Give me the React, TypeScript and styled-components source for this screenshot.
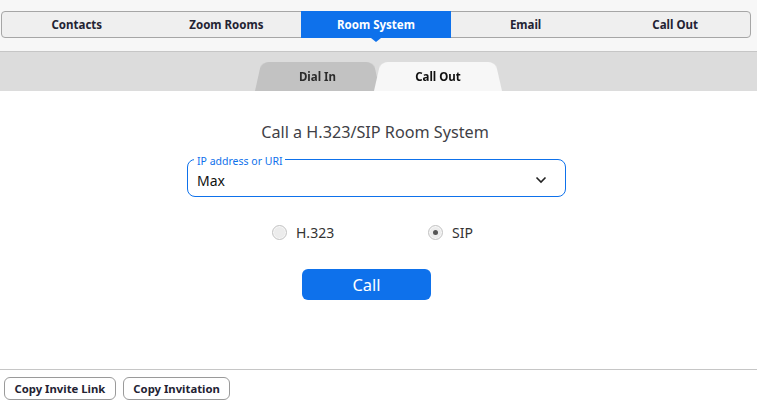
import React, { useState } from "react";
import styled, { createGlobalStyle } from "styled-components";

const Global = createGlobalStyle`
  html, body { margin: 0; padding: 0; background: #ffffff; }
  body { font-family: "Noto Sans", "Open Sans", sans-serif; }
  * { box-sizing: border-box; }
`;

const Page = styled.div`
  width: 757px;
  height: 404px;
  display: flex;
  flex-direction: column;
  background: #ffffff;
  overflow: hidden;
`;

const TopBar = styled.div`
  background: #f7f7f7;
  padding: 11px 6px 0 1px;
  height: 52px;
  border-bottom: 1px solid #c6c6c6;
`;

const Segmented = styled.div`
  display: grid;
  grid-template-columns: repeat(5, 1fr);
  height: 27px;
  border: 1px solid #a6a6a6;
  border-radius: 4px;
  background: #efefef;
`;

const Segment = styled.div<{ $active?: boolean }>`
  position: relative;
  display: flex;
  align-items: center;
  justify-content: center;
  font-size: 11.5px;
  font-weight: 700;
  color: ${(p) => (p.$active ? "#ffffff" : "#232333")};
  background: ${(p) => (p.$active ? "#0e71eb" : "transparent")};
  margin: -1px 0;
  &::after {
    content: "";
    display: ${(p) => (p.$active ? "block" : "none")};
    position: absolute;
    left: 50%;
    bottom: -4px;
    margin-left: -5px;
    border-left: 5px solid transparent;
    border-right: 5px solid transparent;
    border-top: 4px solid #0e71eb;
  }
`;

const SubBar = styled.div`
  background: #dcdcdc;
  height: 39px;
  display: flex;
  justify-content: center;
  align-items: flex-end;
`;

const Tab = styled.div<{ $active?: boolean; $w: number }>`
  position: relative;
  width: ${(p) => p.$w}px;
  height: 33px;
  padding-top: 3px;
  display: flex;
  align-items: center;
  justify-content: center;
  font-size: 11.5px;
  font-weight: 700;
  color: ${(p) => (p.$active ? "#111111" : "#2b2b2b")};
  z-index: ${(p) => (p.$active ? 2 : 1)};
  margin: 0 -3px;
  &::before {
    content: "";
    position: absolute;
    inset: 0;
    background: ${(p) => (p.$active ? "#f7f7f7" : "#c2c2c2")};
    border-radius: 8px 8px 0 0;
    transform: perspective(60px) rotateX(12deg);
    transform-origin: bottom;
    z-index: -1;
  }
`;

const Content = styled.div`
  flex: 1;
  display: flex;
  flex-direction: column;
  align-items: center;
  padding-top: 31px;
`;

const Title = styled.div`
  font-size: 16.2px;
  color: #3f3f46;
  line-height: 20px;
  margin-right: 7px;
`;

const Field = styled.div`
  position: relative;
  margin: 17px 4px 0 0;
  width: 379px;
  height: 38px;
  border: 1px solid #0e71eb;
  border-radius: 8px;
  padding: 4px 18px 0 9px;
  display: flex;
  align-items: center;
  justify-content: space-between;
`;

const Label = styled.span`
  position: absolute;
  left: 6px;
  top: -5px;
  font-size: 10.5px;
  line-height: 12px;
  color: #0e71eb;
  background: #ffffff;
  padding: 0 3px;
`;

const Value = styled.div`
  font-size: 14px;
  color: #111111;
`;

const Chevron = styled.svg`
  width: 12px;
  height: 8px;
`;

const Radios = styled.div`
  display: flex;
  margin-top: 26px;
  margin-left: 3px;
`;

const RadioItem = styled.div<{ $w: number }>`
  width: ${(p) => p.$w}px;
  display: flex;
  align-items: center;
  gap: 9px;
  font-size: 14px;
  color: #333333;
  cursor: pointer;
`;

const RadioCircle = styled.span<{ $checked?: boolean }>`
  width: 15px;
  height: 15px;
  border-radius: 50%;
  border: 1px solid #c4c4c4;
  background: #ececec;
  display: flex;
  align-items: center;
  justify-content: center;
  box-shadow: inset 0 0 0 1px #f7f7f7;
  &::after {
    content: "";
    display: ${(p) => (p.$checked ? "block" : "none")};
    width: 5px;
    height: 5px;
    border-radius: 50%;
    background: #555555;
  }
`;

const CallButton = styled.button`
  margin-top: 27px;
  margin-right: 24px;
  width: 129px;
  height: 31px;
  border: none;
  border-radius: 6px;
  background: #0e71eb;
  color: #ffffff;
  font-family: "Noto Sans", sans-serif;
  font-size: 16.5px;
  padding: 0;
`;

const Footer = styled.div`
  height: 35px;
  border-top: 1px solid #c6c6c6;
  display: flex;
  align-items: flex-start;
  gap: 7px;
  padding: 7px 0 0 4px;
`;

const FooterButton = styled.button`
  height: 23px;
  border: 1px solid #9a9a9a;
  border-radius: 6px;
  background: #ffffff;
  font-family: "Noto Sans", sans-serif;
  font-size: 11.3px;
  font-weight: 700;
  color: #232333;
  padding: 0 9.5px;
`;

export default function App() {
  const [proto, setProto] = useState("SIP");
  const segs = ["Contacts", "Zoom Rooms", "Room System", "Email", "Call Out"];
  return (
    <Page>
      <Global />
      <TopBar>
        <Segmented>
          {segs.map((s) => (
            <Segment key={s} $active={s === "Room System"}>
              {s}
            </Segment>
          ))}
        </Segmented>
      </TopBar>
      <SubBar>
        <Tab $w={125}>Dial In</Tab>
        <Tab $w={128} $active>
          Call Out
        </Tab>
      </SubBar>
      <Content>
        <Title>Call a H.323/SIP Room System</Title>
        <Field>
          <Label>IP address or URI</Label>
          <Value>Max</Value>
          <Chevron viewBox="0 0 12 8">
            <path d="M1.5 1.5 L6 6 L10.5 1.5" fill="none" stroke="#222" strokeWidth="1.6" />
          </Chevron>
        </Field>
        <Radios>
          {[
            { k: "H.323", w: 156 },
            { k: "SIP", w: 60 },
          ].map((r) => (
            <RadioItem key={r.k} $w={r.w} onClick={() => setProto(r.k)}>
              <RadioCircle $checked={proto === r.k} />
              {r.k}
            </RadioItem>
          ))}
        </Radios>
        <CallButton>Call</CallButton>
      </Content>
      <Footer>
        <FooterButton>Copy Invite Link</FooterButton>
        <FooterButton>Copy Invitation</FooterButton>
      </Footer>
    </Page>
  );
}
